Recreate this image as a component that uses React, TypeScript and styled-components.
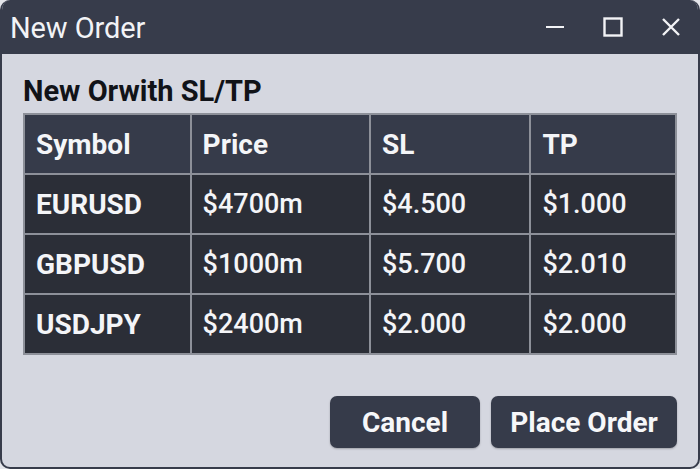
import styled, { createGlobalStyle } from 'styled-components';

const GlobalStyle = createGlobalStyle`
  html, body {
    margin: 0;
    padding: 0;
    background: #e4e5ea;
  }
  body {
    font-family: Roboto, 'Liberation Sans', sans-serif;
  }
`;

const Window = styled.div`
  box-sizing: border-box;
  width: 700px;
  height: 469px;
  display: flex;
  flex-direction: column;
  background: #d5d7e0;
  border: 2px solid #373c4b;
  border-top: none;
  border-radius: 10px;
  overflow: hidden;
`;

const TitleBar = styled.div`
  height: 54px;
  flex: none;
  display: flex;
  align-items: center;
  justify-content: space-between;
  background: #373c4b;
  padding: 0 19px 0 10px;
  margin: 0 -2px;
`;

const Title = styled.div`
  color: #f2f3f6;
  font-size: 29px;
  font-weight: 400;
  letter-spacing: -0.1px;
  padding-top: 1px;
`;

const Controls = styled.div`
  display: flex;
  align-items: center;
  gap: 38px;
  color: #f2f3f6;
`;

const Body = styled.div`
  flex: 1;
  display: flex;
  flex-direction: column;
  padding: 21px 21px 19px 21px;
`;

const Heading = styled.div`
  font-size: 29px;
  font-weight: 700;
  color: #111318;
  line-height: 32px;
  margin-bottom: 6px;
`;

const Table = styled.table`
  border-collapse: collapse;
  width: 654px;
  border: 2px solid #8d9099;
`;

const Cell = styled.td<{ $head?: boolean; $bold?: boolean; $w?: number }>`
  box-sizing: border-box;
  height: 60px;
  width: ${(p) => (p.$w ? `${p.$w}px` : 'auto')};
  border: 2px solid #8d9099;
  background: ${(p) => (p.$head ? '#363b4a' : '#2b2e37')};
  color: #f4f5f8;
  font-size: ${(p) => (p.$bold ? 28 : 27)}px;
  font-weight: ${(p) => (p.$bold ? 700 : 500)};
  padding: 0 0 0 11px;
  text-align: left;
  vertical-align: middle;
`;

const Actions = styled.div`
  margin-top: auto;
  display: flex;
  justify-content: flex-end;
  gap: 11px;
`;

const Button = styled.button<{ $w: number }>`
  width: ${(p) => p.$w}px;
  height: 52px;
  border: none;
  border-radius: 7px;
  background: #363b4a;
  color: #f6f7f9;
  font-family: Roboto, 'Liberation Sans', sans-serif;
  font-size: 28px;
  font-weight: 700;
  padding: 0;
  box-shadow: 0 1px 2px rgba(0, 0, 0, 0.25);
`;

const rows = [
  ['EURUSD', '$4700m', '$4.500', '$1.000'],
  ['GBPUSD', '$1000m', '$5.700', '$2.010'],
  ['USDJPY', '$2400m', '$2.000', '$2.000'],
];

const widths = [167, 180, 161, 146];

function App() {
  return (
    <>
      <GlobalStyle />
      <Window>
        <TitleBar>
          <Title>New Order</Title>
          <Controls>
            <svg width="20" height="20" viewBox="0 0 20 20">
              <line x1="1" y1="10" x2="19" y2="10" stroke="currentColor" strokeWidth="2" />
            </svg>
            <svg width="20" height="20" viewBox="0 0 20 20">
              <rect x="1.5" y="1.5" width="17" height="17" fill="none" stroke="currentColor" strokeWidth="2.4" />
            </svg>
            <svg width="20" height="20" viewBox="0 0 20 20">
              <path d="M2 2 L18 18 M18 2 L2 18" stroke="currentColor" strokeWidth="2.4" />
            </svg>
          </Controls>
        </TitleBar>
        <Body>
          <Heading>New Orwith SL/TP</Heading>
          <Table>
            <thead>
              <tr>
                {['Symbol', 'Price', 'SL', 'TP'].map((h, i) => (
                  <Cell as="th" key={h} $head $bold $w={widths[i]}>
                    {h}
                  </Cell>
                ))}
              </tr>
            </thead>
            <tbody>
              {rows.map((r) => (
                <tr key={r[0]}>
                  {r.map((v, i) => (
                    <Cell key={i} $bold={i === 0}>
                      {v}
                    </Cell>
                  ))}
                </tr>
              ))}
            </tbody>
          </Table>
          <Actions>
            <Button $w={150}>Cancel</Button>
            <Button $w={186}>Place Order</Button>
          </Actions>
        </Body>
      </Window>
    </>
  );
}

export default App;
